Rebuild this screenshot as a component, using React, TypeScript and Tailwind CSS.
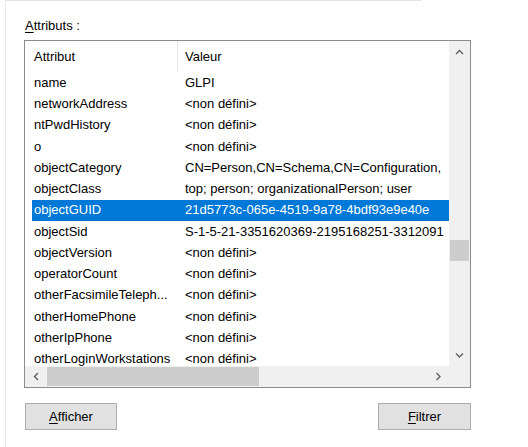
import React from 'react';

type Attr = { name: string; value: string };

const attributes: Attr[] = [
  { name: 'name', value: 'GLPI' },
  { name: 'networkAddress', value: '<non défini>' },
  { name: 'ntPwdHistory', value: '<non défini>' },
  { name: 'o', value: '<non défini>' },
  { name: 'objectCategory', value: 'CN=Person,CN=Schema,CN=Configuration,' },
  { name: 'objectClass', value: 'top; person; organizationalPerson; user' },
  { name: 'objectGUID', value: '21d5773c-065e-4519-9a78-4bdf93e9e40e' },
  { name: 'objectSid', value: 'S-1-5-21-3351620369-2195168251-3312091' },
  { name: 'objectVersion', value: '<non défini>' },
  { name: 'operatorCount', value: '<non défini>' },
  { name: 'otherFacsimileTeleph...', value: '<non défini>' },
  { name: 'otherHomePhone', value: '<non défini>' },
  { name: 'otherIpPhone', value: '<non défini>' },
  { name: 'otherLoginWorkstations', value: '<non défini>' },
];

const selected = 'objectGUID';

function Chevron({ dir }: { dir: 'up' | 'down' | 'left' | 'right' }) {
  const pts = {
    up: '1,5 4.5,1.5 8,5',
    down: '1,1.5 4.5,5 8,1.5',
    left: '5,1 1.5,4.5 5,8',
    right: '1.5,1 5,4.5 1.5,8',
  }[dir];
  const horiz = dir === 'left' || dir === 'right';
  return (
    <svg width={horiz ? 7 : 9} height={horiz ? 9 : 7} viewBox={horiz ? '0 0 7 9' : '0 0 9 7'}>
      <polyline points={pts} fill="none" stroke="#606060" strokeWidth="1.4" />
    </svg>
  );
}

function Button({ accel, rest }: { accel: string; rest: string }) {
  return (
    <button className="w-full h-[27px] bg-[#e1e1e1] border border-[#adadad] text-[13px] text-black flex items-center justify-center">
      <span>
        <span className="underline underline-offset-2">{accel}</span>
        {rest}
      </span>
    </button>
  );
}

export default function App() {
  return (
    <div className="w-[528px] h-[447px] bg-white overflow-hidden flex font-['Liberation_Sans',Arial,sans-serif] text-[13px] text-black">
      <div className="w-[5px] shrink-0" />
      <div className="flex-1 flex flex-col border-l border-[#e8e8e8]">
        <div className="h-px w-[415px] bg-[#e3e3e3]" />

        {/* Attribute list */}
        <div className="pl-[19px] mt-[17px] leading-[15px]">
          <span className="underline underline-offset-2">A</span>ttributs :
        </div>

        <div className="ml-[18px] mt-[7px] w-[447px] h-[348px] border border-[#8c8c8c] flex flex-col">
          <div className="h-[325px] flex">
            <div className="flex-1 flex flex-col overflow-hidden">
              <div className="h-[31px] shrink-0 flex">
                <div className="w-[152px] pl-[9px] flex items-center">Attribut</div>
                <div className="w-px bg-[#e5e5e5]" />
                <div className="pl-[7px] flex items-center">Valeur</div>
              </div>
              <div className="flex-1 overflow-hidden">
                {attributes.map((a) => {
                  const sel = a.name === selected;
                  return (
                    <div
                      key={a.name}
                      className={`ml-[7px] h-[21.25px] flex items-center overflow-hidden whitespace-nowrap ${
                        sel ? 'bg-[#0078d7] text-white' : ''
                      }`}
                    >
                      <div className="w-[153px] shrink-0 pl-[2px]">{a.name}</div>
                      <div>{a.value}</div>
                    </div>
                  );
                })}
              </div>
            </div>

            {/* Vertical scrollbar */}
            <div className="w-[21px] bg-[#f0f0f0] flex flex-col items-center">
              <div className="h-[22px] flex items-center justify-center">
                <Chevron dir="up" />
              </div>
              <div className="mt-[177px] w-[19px] h-[21px] bg-[#cdcdcd]" />
              <div className="flex-1" />
              <div className="h-[22px] flex items-center justify-center">
                <Chevron dir="down" />
              </div>
            </div>
          </div>

          {/* Horizontal scrollbar */}
          <div className="h-[21px] flex bg-[#f0f0f0]">
            <div className="w-[22px] flex items-center justify-center">
              <Chevron dir="left" />
            </div>
            <div className="w-[212px] h-[19px] self-center bg-[#cdcdcd]" />
            <div className="flex-1" />
            <div className="w-[22px] flex items-center justify-center">
              <Chevron dir="right" />
            </div>
            <div className="w-[21px]" />
          </div>
        </div>

        <div className="ml-[19px] mt-[15px] w-[446px] flex justify-between">
          <div className="w-[92px]">
            <Button accel="A" rest="fficher" />
          </div>
          <div className="w-[93px]">
            <Button accel="F" rest="iltrer" />
          </div>
        </div>
      </div>
    </div>
  );
}
